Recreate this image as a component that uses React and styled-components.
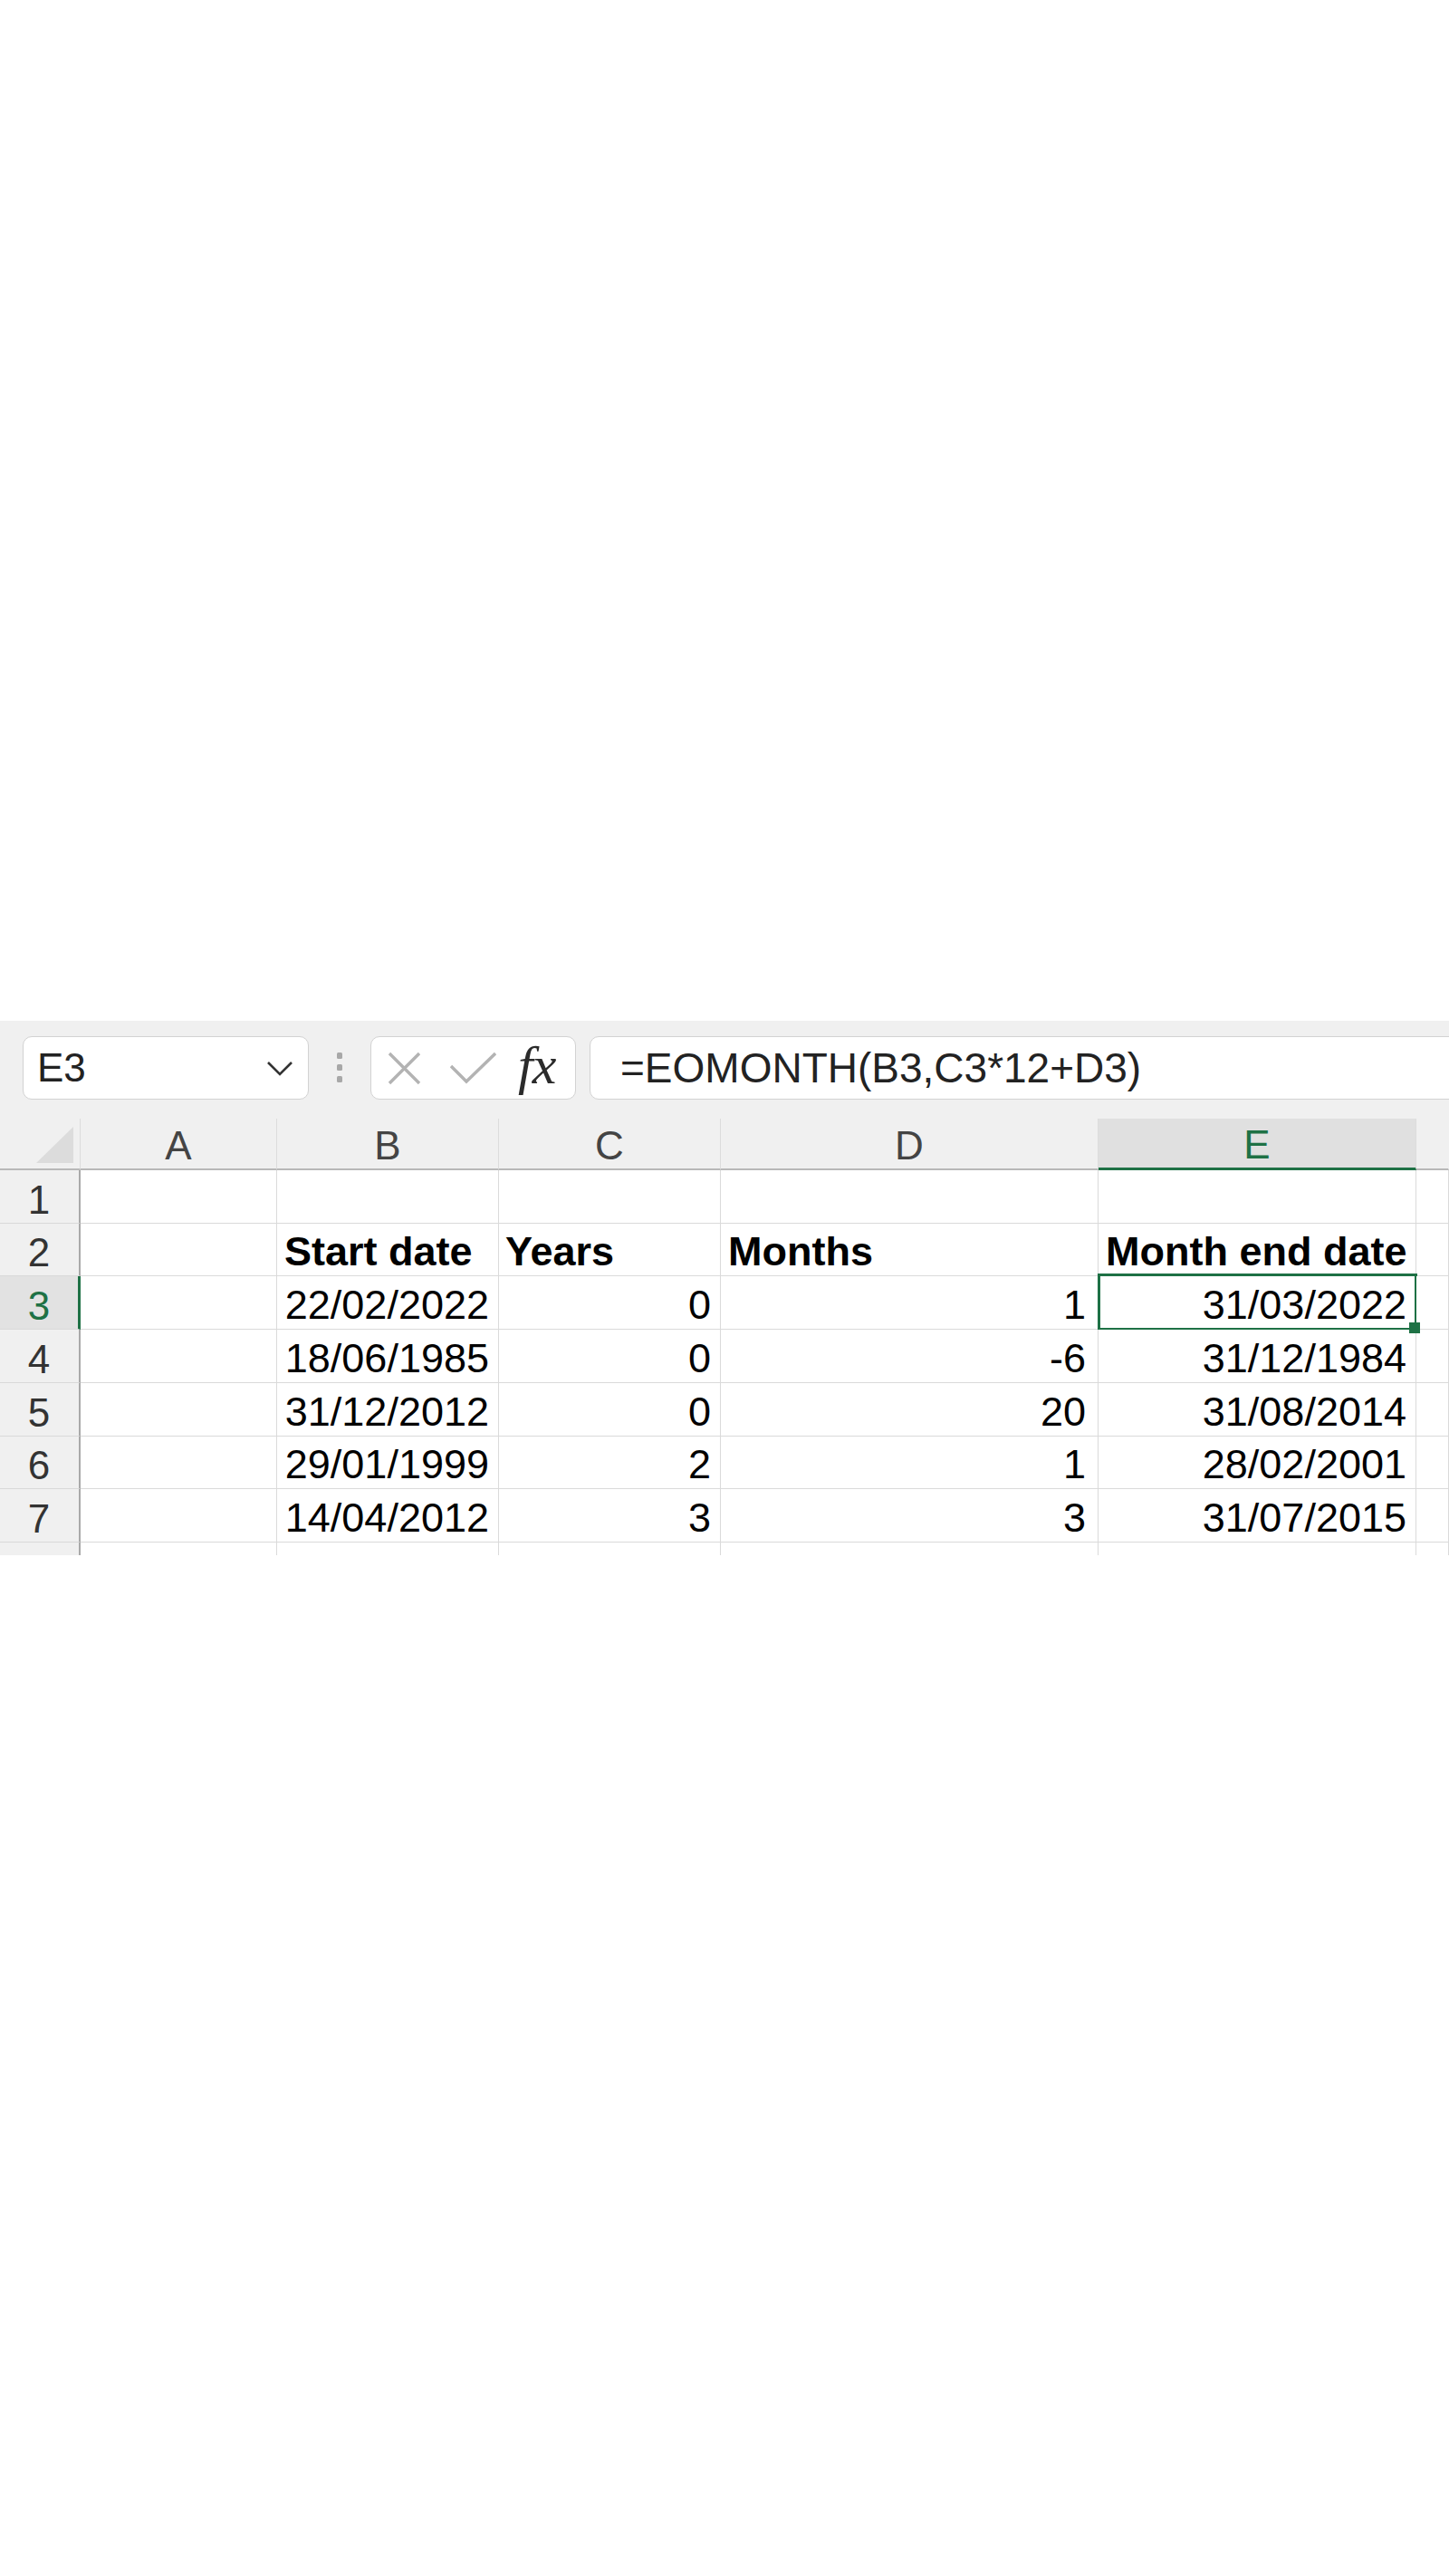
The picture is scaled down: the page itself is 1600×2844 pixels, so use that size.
import React from "react";
import styled, { createGlobalStyle, css } from "styled-components";

const GREEN = "#1e7145";

const GlobalStyle = createGlobalStyle`
  html, body { margin: 0; padding: 0; background: #fff; }
  body { font-family: "Liberation Sans", Arial, sans-serif; }
`;

const Page = styled.div`
  width: 1600px;
  height: 2844px;
  padding-top: 1127px;
  box-sizing: border-box;
  overflow: hidden;
`;

const Workbook = styled.div`
  background: #f0f0f0;
`;

// name box / buttons / formula input
const FormulaRow = styled.div`
  display: flex;
  align-items: center;
  height: 70px;
  padding: 17px 0 21px 25px;
`;

const Field = styled.div`
  height: 70px;
  box-sizing: border-box;
  background: #fff;
  border: 1.5px solid #d2d2d2;
  border-radius: 10px;
  display: flex;
  align-items: center;
`;

const NameBox = styled(Field)`
  width: 316px;
  justify-content: space-between;
  padding: 0 16px 0 15px;
  font-size: 44px;
  color: #222;
`;

const Grip = styled.div`
  margin-left: 31px;
  display: flex;
  align-items: center;
`;

const Buttons = styled(Field)`
  margin-left: 31px;
  width: 227px;
  padding-left: 18px;
`;

const IconSlot = styled.span`
  display: inline-flex;
  margin-left: ${(p) => p.$gap || 0}px;
`;

const Fx = styled.span`
  margin-left: 24px;
  font-family: "Liberation Serif", "Times New Roman", serif;
  font-style: italic;
  font-size: 60px;
  color: #2b2b2b;
  line-height: 1;
  margin-top: -6px;
  letter-spacing: -1px;
`;

const FormulaInput = styled(Field)`
  flex: 1;
  margin-left: 15px;
  margin-right: -20px;
  padding-left: 33px;
  font-size: 46px;
  color: #222;
`;

// the sheet
const Sheet = styled.div`
  display: grid;
  grid-template-columns: 89px 217px 245px 245px 417px 351px 1fr;
  grid-template-rows: 57px 59px 58px 59px 59px 59px 58px 59px 14px;
  font-size: 45px;
`;

const Cell = styled.div`
  box-sizing: border-box;
  background: #fff;
  border-right: 1px solid #dadada;
  border-bottom: ${(p) => (p.$last ? "none" : "1px solid #dadada")};
  display: flex;
  align-items: flex-end;
  justify-content: ${(p) => (p.$right ? "flex-end" : "flex-start")};
  padding: 0 ${(p) => (p.$right ? p.$pad || 10 : 0)}px 0
    ${(p) => (p.$right ? 0 : p.$pad || 8)}px;
  font-weight: ${(p) => (p.$bold ? 700 : 400)};
  color: #000;
  white-space: nowrap;
  position: relative;
  ${(p) =>
    p.$selected &&
    css`
      &::after {
        content: "";
        position: absolute;
        top: -3px;
        left: -1px;
        right: -2px;
        bottom: -2px;
        border: 3px solid ${GREEN};
        pointer-events: none;
      }
      &::before {
        content: "";
        position: absolute;
        right: -5px;
        bottom: -5px;
        width: 12px;
        height: 12px;
        background: ${GREEN};
        z-index: 2;
      }
    `}
`;

const Corner = styled.div`
  box-sizing: border-box;
  background: #f0f0f0;
  border-right: 1px solid #dcdcdc;
  border-bottom: 2px solid #b8b8b8;
  display: flex;
  align-items: flex-end;
  justify-content: flex-end;
  padding: 0 7px 6px 0;
`;

const ColHead = styled.div`
  box-sizing: border-box;
  background: ${(p) => (p.$active ? "#e0e0e0" : "#f0f0f0")};
  border-right: 1px solid ${(p) => (p.$open ? "transparent" : "#dcdcdc")};
  border-bottom: ${(p) => (p.$active ? `3px solid ${GREEN}` : "2px solid #b8b8b8")};
  color: ${(p) => (p.$active ? GREEN : "#444")};
  display: flex;
  align-items: flex-end;
  justify-content: center;
  padding-bottom: 0;
  font-size: 44px;
`;

const RowHead = styled.div`
  box-sizing: border-box;
  background: ${(p) => (p.$active ? "#e2e2e2" : "#f0f0f0")};
  border-right: ${(p) => (p.$active ? `3px solid ${GREEN}` : "2px solid #a9a9a9")};
  border-bottom: ${(p) => (p.$last ? "none" : "1px solid #d9d9d9")};
  color: ${(p) => (p.$active ? GREEN : "#333")};
  display: flex;
  align-items: flex-end;
  justify-content: center;
  padding: 0 ${(p) => (p.$active ? 0 : 1)}px 0 0;
  font-size: 44px;
`;

const Chevron = () => (
  <svg width="30" height="17" viewBox="0 0 30 17" fill="none">
    <polyline points="2,2 15,15 28,2" stroke="#333" strokeWidth="2.6" />
  </svg>
);

const GripDots = () => (
  <svg width="6" height="34" viewBox="0 0 6 34">
    <rect x="0" y="0" width="6" height="7" rx="1.5" fill="#a8a8a8" />
    <rect x="0" y="13" width="6" height="7" rx="1.5" fill="#a8a8a8" />
    <rect x="0" y="26" width="6" height="7" rx="1.5" fill="#a8a8a8" />
  </svg>
);

const CancelIcon = () => (
  <svg width="37" height="37" viewBox="0 0 37 37">
    <path d="M2 2 L35 35 M35 2 L2 35" stroke="#b3b3b3" strokeWidth="3.4" />
  </svg>
);

const EnterIcon = () => (
  <svg width="51" height="36" viewBox="0 0 51 36">
    <polyline points="1,16 18,33 50,2" fill="none" stroke="#b3b3b3" strokeWidth="3.4" />
  </svg>
);

const columns = ["A", "B", "C", "D", "E"];

const rows = [
  { n: 1, cells: [] },
  { n: 2, header: true, cells: ["Start date", "Years", "Months", "Month end date"] },
  { n: 3, cells: ["22/02/2022", "0", "1", "31/03/2022"] },
  { n: 4, cells: ["18/06/1985", "0", "-6", "31/12/1984"] },
  { n: 5, cells: ["31/12/2012", "0", "20", "31/08/2014"] },
  { n: 6, cells: ["29/01/1999", "2", "1", "28/02/2001"] },
  { n: 7, cells: ["14/04/2012", "3", "3", "31/07/2015"] },
];

// padding per column (B..E)
const rightPad = [10, 10, 13, 10];
const leftPad = [8, 7, 8, 8];

export default function App() {
  return (
    <Page>
      <GlobalStyle />
      <Workbook>
        <FormulaRow>
          <NameBox>
            <span>E3</span>
            <Chevron />
          </NameBox>
          <Grip>
            <GripDots />
          </Grip>
          <Buttons>
            <IconSlot>
              <CancelIcon />
            </IconSlot>
            <IconSlot $gap={32}>
              <EnterIcon />
            </IconSlot>
            <Fx>fx</Fx>
          </Buttons>
          <FormulaInput>=EOMONTH(B3,C3*12+D3)</FormulaInput>
        </FormulaRow>

        <Sheet>
          <Corner>
            <svg width="41" height="40" viewBox="0 0 41 40">
              <polygon points="41,0 41,40 0,40" fill="#dcdcdc" />
            </svg>
          </Corner>
          {columns.map((c) => (
            <ColHead key={c} $active={c === "E"}>
              {c}
            </ColHead>
          ))}
          <ColHead $open />

          {rows.map((row) => (
            <React.Fragment key={row.n}>
              <RowHead $active={row.n === 3}>{row.n}</RowHead>
              <Cell />
              {[0, 1, 2, 3].map((i) => {
                const v = row.cells[i];
                const right = !row.header && v !== undefined;
                return (
                  <Cell
                    key={i}
                    $bold={row.header}
                    $right={right}
                    $pad={right ? rightPad[i] : leftPad[i]}
                    $selected={row.n === 3 && i === 3}
                  >
                    {v}
                  </Cell>
                );
              })}
              <Cell />
            </React.Fragment>
          ))}

          <RowHead $last />
          {[0, 1, 2, 3, 4, 5].map((i) => (
            <Cell key={i} $last />
          ))}
        </Sheet>
      </Workbook>
    </Page>
  );
}
